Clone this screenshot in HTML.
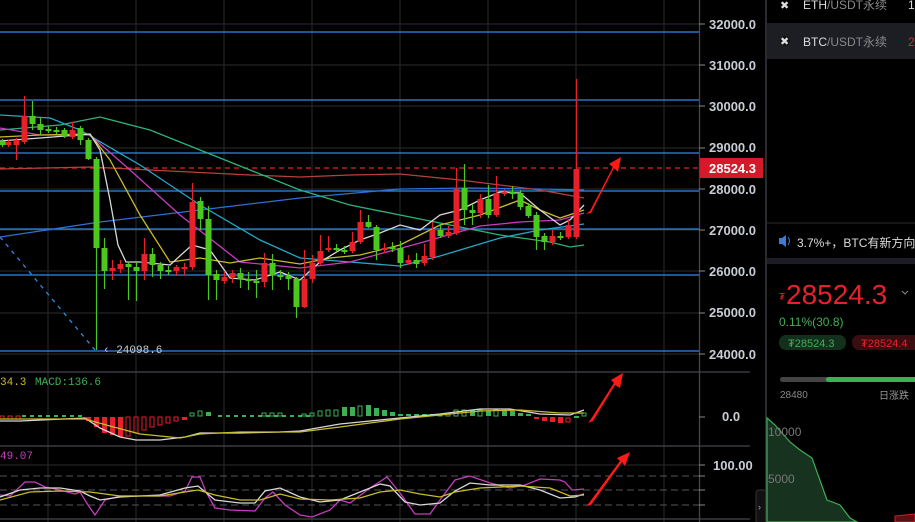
<!DOCTYPE html>
<html><head><meta charset="utf-8"><style>
html,body{margin:0;padding:0;background:#000;width:915px;height:522px;overflow:hidden;font-family:"Liberation Sans","Noto Sans CJK SC",sans-serif}
svg{position:absolute;left:0;top:0}
</style></head><body>
<svg width="915" height="522" viewBox="0 0 915 522" xmlns="http://www.w3.org/2000/svg">
<rect width="915" height="522" fill="#000"/>
<g stroke="#2a2b30" stroke-width="1">
<line x1="48" y1="0" x2="48" y2="522"/><line x1="136" y1="0" x2="136" y2="522"/><line x1="224" y1="0" x2="224" y2="522"/><line x1="312" y1="0" x2="312" y2="522"/><line x1="400" y1="0" x2="400" y2="522"/><line x1="488" y1="0" x2="488" y2="522"/><line x1="576" y1="0" x2="576" y2="522"/><line x1="664" y1="0" x2="664" y2="522"/>
<line x1="0" y1="24" x2="699" y2="24"/><line x1="0" y1="65" x2="699" y2="65"/><line x1="0" y1="106" x2="699" y2="106"/><line x1="0" y1="148" x2="699" y2="148"/><line x1="0" y1="189" x2="699" y2="189"/><line x1="0" y1="230" x2="699" y2="230"/><line x1="0" y1="271" x2="699" y2="271"/><line x1="0" y1="313" x2="699" y2="313"/><line x1="0" y1="354" x2="699" y2="354"/>
<line x1="0" y1="465" x2="699" y2="465"/>
</g>
<g stroke="#45464c" stroke-width="1.3">
<line x1="0" y1="372" x2="750" y2="372"/><line x1="0" y1="446" x2="750" y2="446"/><line x1="0" y1="519" x2="750" y2="519"/>
<line x1="699.5" y1="0" x2="699.5" y2="522"/>
</g>
<g stroke="#55565c" stroke-dasharray="7,4">
<line x1="0" y1="476" x2="699" y2="476"/><line x1="0" y1="490" x2="699" y2="490"/><line x1="0" y1="505" x2="699" y2="505"/>
</g>
<g stroke="#2f8ae8" stroke-width="1.3">
<line x1="0" y1="32" x2="699" y2="32"/><line x1="0" y1="100" x2="699" y2="100"/><line x1="0" y1="153" x2="699" y2="153"/><line x1="0" y1="191" x2="699" y2="191"/><line x1="0" y1="229" x2="699" y2="229"/><line x1="0" y1="275" x2="699" y2="275"/><line x1="0" y1="351" x2="699" y2="351"/>
</g>
<line x1="0" y1="168" x2="699" y2="168" stroke="#e8202a" stroke-dasharray="5,4" stroke-width="1.2"/>
<line x1="0" y1="237" x2="95" y2="350" stroke="#2f8ae8" stroke-dasharray="4,5" stroke-width="1.3"/>
<g fill="none" stroke-width="1.3">
<polyline stroke="#2f6fd8" points="0,237 100,222 200,210 300,198 400,189 470,188 540,189 584,190"/>
<polyline stroke="#b8403a" points="0,169 90,167 150,170 250,175 300,177 350,175 400,174 460,180 540,190 584,198"/>
<polyline stroke="#2eb37a" points="0,130 60,125 100,117 150,130 250,170 300,190 350,205 400,215 500,235 550,242 570,247 584,245"/>
<polyline stroke="#25a8c8" points="0,115 50,118 80,130 140,165 200,205 260,240 300,258 350,262 400,266 440,256 500,238 540,230 584,224"/>
<polyline stroke="#c83cc0" points="0,128 40,135 90,135 130,170 180,215 240,262 300,268 350,262 420,243 480,226 520,222 560,220 584,213"/>
<polyline stroke="#c8bc2a" points="0,137 40,135 90,134 110,160 140,215 170,262 200,258 230,263 260,258 300,264 330,258 360,255 400,245 440,225 480,215 520,200 540,210 560,218 584,210"/>
<polyline stroke="#d8d8d8" points="0,141 40,138 90,134 100,150 110,200 118,245 126,262 140,262 170,265 192,245 210,250 230,278 255,280 280,272 300,280 320,262 340,250 360,240 380,233 400,225 420,230 440,215 460,210 480,200 500,192 520,193 540,210 560,225 570,220 584,205"/>
</g>
<g id="c" stroke-width="1.2"></g>
<text x="103" y="353" fill="#c8ccd4" font-size="11" font-family="Liberation Mono,monospace">‹ 24098.6</text>
<text x="0" y="385" fill="#c8bc2a" font-size="11" font-family="Liberation Mono,monospace">34.3</text>
<text x="35" y="385" fill="#3daf55" font-size="11" font-family="Liberation Mono,monospace">MACD:136.6</text>
<g stroke="#3daf55" stroke-dasharray="4,4" stroke-width="2"><line x1="22" y1="416" x2="84" y2="416"/><line x1="218" y1="416" x2="312" y2="416"/></g>
<g fill="#e8202a">
<rect x="86" y="417" width="5" height="4"/><rect x="94" y="417" width="5" height="10"/><rect x="102" y="417" width="5" height="16"/><rect x="110" y="417" width="5" height="18"/><rect x="118" y="417" width="5" height="20"/>
</g>
<g fill="none" stroke="#e8202a"><rect x="126" y="417" width="4" height="19"/><rect x="134" y="417" width="4" height="16"/><rect x="142" y="417" width="4" height="13"/><rect x="150" y="417" width="4" height="10"/><rect x="158" y="417" width="4" height="8"/><rect x="166" y="417" width="4" height="6"/><rect x="174" y="417" width="4" height="4"/><rect x="0" y="416" width="4" height="3"/><rect x="8" y="416" width="4" height="3"/><rect x="16" y="416" width="4" height="3"/></g>
<rect x="182" y="417" width="5" height="3" fill="#e8202a"/>
<g fill="none" stroke="#3daf55"><rect x="190" y="413" width="4" height="3"/><rect x="198" y="411" width="4" height="5"/><rect x="262" y="413" width="4" height="3"/><rect x="270" y="413" width="4" height="3"/><rect x="278" y="413" width="4" height="3"/><rect x="302" y="414" width="4" height="2"/><rect x="310" y="413" width="4" height="3"/><rect x="318" y="411" width="4" height="5"/><rect x="326" y="410" width="4" height="6"/><rect x="334" y="410" width="4" height="6"/><rect x="358" y="406" width="4" height="10"/><rect x="438" y="414" width="4" height="2"/><rect x="446" y="413" width="4" height="3"/><rect x="454" y="410" width="4" height="6"/><rect x="462" y="410" width="4" height="6"/><rect x="478" y="410" width="4" height="6"/><rect x="494" y="410" width="4" height="6"/><rect x="582" y="413" width="4" height="3"/><rect x="566" y="418" width="4" height="4" stroke="#e8202a"/></g>
<g fill="#3daf55"><rect x="206" y="412" width="5" height="4"/><rect x="342" y="407" width="5" height="9"/><rect x="350" y="407" width="5" height="9"/><rect x="366" y="405" width="5" height="11"/><rect x="374" y="408" width="5" height="8"/><rect x="382" y="410" width="5" height="6"/><rect x="390" y="412" width="5" height="4"/><rect x="398" y="414" width="5" height="2"/><rect x="406" y="414" width="5" height="2"/><rect x="414" y="414" width="5" height="2"/><rect x="422" y="414" width="5" height="2"/><rect x="430" y="414" width="5" height="2"/><rect x="470" y="410" width="5" height="6"/><rect x="486" y="411" width="5" height="5"/><rect x="502" y="410" width="5" height="6"/><rect x="510" y="411" width="5" height="5"/><rect x="518" y="413" width="5" height="3"/><rect x="526" y="414" width="5" height="2"/><rect x="574" y="416" width="5" height="2"/></g>
<g fill="#e8202a"><rect x="534" y="417" width="5" height="2"/><rect x="542" y="417" width="5" height="4"/><rect x="550" y="417" width="5" height="5"/><rect x="558" y="417" width="5" height="6"/></g>
<g fill="none" stroke-width="1.3">
<polyline stroke="#d8d8d8" points="0,421 20,421 85,418 100,428 120,437 136,440 160,440 185,437 200,433 240,433 280,432 300,431 340,424 360,422 400,418 440,414 480,409 510,409 540,414 570,415 584,410"/>
<polyline stroke="#c8bc2a" points="0,419 85,419 110,426 140,434 180,438 200,434 240,432 300,432 340,427 400,419 440,415 480,411 520,410 560,413 584,413"/>
</g>
<text x="0" y="459" fill="#c83cc0" font-size="11" font-family="Liberation Mono,monospace">49.07</text>
<g fill="none" stroke-width="1.3">
<polyline stroke="#c83cc0" points="0,495 10,496 25,482 35,482 45,487 60,490 75,494 80,492 88,505 95,515 105,500 120,496 140,496 170,496 185,491 192,477 200,477 206,492 215,508 230,510 255,511 265,498 273,492 285,505 300,515 312,517 330,510 340,500 350,503 370,488 387,477 400,493 415,514 430,514 440,500 455,480 470,476 490,483 510,488 525,485 540,479 560,480 565,482 572,490 584,489"/>
<polyline stroke="#d8d8d8" points="0,497 20,490 40,488 60,488 80,491 90,496 100,500 120,497 160,495 185,488 198,486 215,500 240,503 255,503 265,491 280,488 300,497 320,502 340,500 350,496 380,484 390,486 405,502 420,505 440,503 455,491 470,483 490,485 520,485 540,490 560,498 575,497 584,494"/>
<polyline stroke="#c8bc2a" points="0,500 30,492 60,491 90,492 120,496 160,496 185,492 198,490 215,495 240,500 260,500 280,494 300,499 330,500 360,498 380,492 400,490 420,494 440,497 455,492 480,488 520,486 550,488 570,496 584,495"/>
</g>
<g fill="#ff1a1a">
<polygon points="586,214 591,213 614,168 618,172 621,157 609,164 613,167 590,211"/>
<polygon points="588,423 593,421 615,385 620,388 623,373 611,380 614,383 591,419"/>
<polygon points="586,506 591,505 622,462 625,466 630,452 617,458 620,461 589,503"/>
</g>
<g fill="#c8ccd4" font-size="13" font-weight="bold">
<text x="709" y="29">32000.0</text><text x="709" y="70">31000.0</text><text x="709" y="111">30000.0</text><text x="709" y="152">29000.0</text><text x="709" y="194">28000.0</text><text x="709" y="235">27000.0</text><text x="709" y="276">26000.0</text><text x="709" y="317">25000.0</text><text x="709" y="359">24000.0</text>
<text x="722" y="421">0.0</text><text x="713" y="470">100.00</text>
</g>
<g stroke="#888" stroke-width="1"><line x1="699" y1="24" x2="705" y2="24"/><line x1="699" y1="65" x2="705" y2="65"/><line x1="699" y1="106" x2="705" y2="106"/><line x1="699" y1="148" x2="705" y2="148"/><line x1="699" y1="189" x2="705" y2="189"/><line x1="699" y1="230" x2="705" y2="230"/><line x1="699" y1="271" x2="705" y2="271"/><line x1="699" y1="313" x2="705" y2="313"/><line x1="699" y1="354" x2="705" y2="354"/><line x1="699" y1="417" x2="705" y2="417"/><line x1="699" y1="465" x2="705" y2="465"/><line x1="699" y1="476" x2="705" y2="476"/><line x1="699" y1="490" x2="705" y2="490"/><line x1="699" y1="505" x2="705" y2="505"/></g>
<rect x="700" y="158" width="63" height="20" fill="#d41a2a"/>
<text x="709" y="173" fill="#fff" font-size="13" font-weight="bold">28524.3</text>
<rect x="756" y="490" width="10" height="34" rx="3" fill="#111" stroke="#333"/>
<text x="758" y="510" fill="#aaa" font-size="9">›</text>
<rect x="765" y="0" width="150" height="522" fill="#000"/>
<line x1="766" y1="0" x2="766" y2="522" stroke="#2a2b30" stroke-width="2"/>
<rect x="767" y="23" width="148" height="36" fill="#1c1e24"/>
<text x="780" y="9" fill="#ddd" font-size="11">✖</text>
<text x="803" y="9" fill="#ddd" font-size="12">ETH<tspan fill="#888">/USDT永续</tspan></text>
<text x="908" y="9" fill="#ddd" font-size="12">1</text>
<circle cx="785" cy="41" r="5" fill="#111"/><text x="780" y="45" fill="#ddd" font-size="11">✖</text>
<text x="803" y="46" fill="#ddd" font-size="12">BTC<tspan fill="#888">/USDT永续</tspan></text>
<text x="908" y="46" fill="#e8202a" font-size="12">2</text>
<line x1="767" y1="223" x2="915" y2="223" stroke="#2a2b30"/>
<path d="M779 238h3l4-3v12l-4-3h-3z" fill="#3a7ad8"/><path d="M788 237q3 4 0 8" stroke="#3a7ad8" fill="none"/>
<text x="797" y="247" fill="#ddd" font-size="12">3.7%+，BTC有新方向</text>
<rect x="767" y="258" width="148" height="6" fill="#1c1e24"/>
<text x="779" y="300" fill="#e8202a" font-size="10">₮</text>
<text x="786" y="304" fill="#e8202a" font-size="28">28524.3</text>
<path d="M902 291l3 3 3-3" stroke="#888" fill="none"/>
<text x="779" y="326" fill="#3daf55" font-size="12">0.11%(30.8)</text>
<rect x="779" y="335" width="67" height="15" rx="7" fill="#13301c"/>
<text x="788" y="347" fill="#3daf55" font-size="11">₮28524.3</text>
<rect x="852" y="335" width="70" height="15" rx="7" fill="#3a0e10"/>
<text x="861" y="347" fill="#e8202a" font-size="11">₮28524.4</text>
<rect x="780" y="377" width="50" height="5" rx="2.5" fill="#444"/>
<rect x="826" y="377" width="95" height="5" rx="2.5" fill="#3daf55"/>
<text x="780" y="398" fill="#888" font-size="10">28480</text>
<text x="879" y="399" fill="#999" font-size="10">日涨跌</text>
<path d="M767 418L775 425L790 442L800 450L812 458L827 500L835 503L840 505L850 518L857 522L767 522Z" fill="#17321f" stroke="#3daf55" stroke-width="1.2"/>
<text x="768" y="436" fill="#777" font-size="12">10000</text>
<text x="768" y="483" fill="#777" font-size="12">5000</text>
<path d="M895 516L915 514L915 522L895 522Z" fill="#5a1015" stroke="#d41a2a"/>
</svg>
<script>
var d=[[2,141,145,139,147,'G'],[8,142,145,140,147,'R'],[16,140,145,138,160,'R'],[24,116,142,96,144,'R'],[32,116,124,101,130,'G'],[40,124,130,118,135,'G'],[48,129,131,126,133,'G'],[56,130,131,127,134,'G'],[64,130,136,128,138,'G'],[72,130,137,122,139,'R'],[80,128,140,126,145,'G'],[88,140,159,138,160,'G'],[96,159,248,157,350,'G'],[104,248,271,238,289,'G'],[112,268,271,260,280,'R'],[120,264,269,260,273,'R'],[128,264,267,262,300,'G'],[136,267,271,262,301,'G'],[144,254,271,238,280,'R'],[152,254,265,248,277,'G'],[160,265,271,262,279,'G'],[168,270,272,266,275,'G'],[176,267,271,265,276,'R'],[184,267,268,263,275,'R'],[192,202,267,183,270,'R'],[200,201,219,197,230,'G'],[208,219,275,206,300,'G'],[216,274,280,270,300,'G'],[224,277,281,271,284,'R'],[232,273,277,270,283,'R'],[240,273,279,268,288,'G'],[248,279,281,272,290,'G'],[256,281,282,270,298,'G'],[264,263,282,253,287,'R'],[272,263,275,254,290,'G'],[280,275,276,270,280,'G'],[288,276,279,272,290,'G'],[296,279,307,277,318,'G'],[304,279,307,250,308,'R'],[312,263,279,255,283,'R'],[320,251,263,235,266,'R'],[328,248,250,236,252,'R'],[336,248,250,244,252,'G'],[344,250,251,246,254,'G'],[352,242,251,232,253,'R'],[360,222,242,210,244,'R'],[368,222,227,215,228,'G'],[376,227,250,225,260,'G'],[384,248,250,243,253,'R'],[392,247,249,242,252,'G'],[400,248,263,241,268,'G'],[408,260,263,255,265,'R'],[416,260,264,253,268,'G'],[424,256,263,244,266,'R'],[432,230,257,222,260,'R'],[440,230,236,224,238,'G'],[448,232,236,226,238,'R'],[456,189,233,168,235,'R'],[464,188,210,164,225,'G'],[472,210,213,204,225,'G'],[480,199,213,194,218,'R'],[488,199,215,185,218,'G'],[496,193,215,176,217,'R'],[504,192,194,189,196,'R'],[512,192,193,186,199,'G'],[520,193,207,190,210,'G'],[528,206,216,203,218,'G'],[536,215,237,212,250,'G'],[544,236,242,233,250,'G'],[552,236,242,230,245,'R'],[560,236,237,232,240,'G'],[568,225,237,219,239,'R'],[576,169,237,79,239,'R']];
var g=document.getElementById('c'),s='';
d.forEach(function(c){var col=c[5]=='G'?'#4cc71e':'#e8202a';var h=Math.max(2,c[2]-c[1]);
s+='<line x1="'+(c[0]+.5)+'" x2="'+(c[0]+.5)+'" y1="'+c[3]+'" y2="'+c[4]+'" stroke="'+col+'"/>';
s+='<rect x="'+(c[0]-2.5)+'" y="'+c[1]+'" width="6" height="'+h+'" fill="'+col+'"/>';});
g.innerHTML=s;
</script>
</body></html>
